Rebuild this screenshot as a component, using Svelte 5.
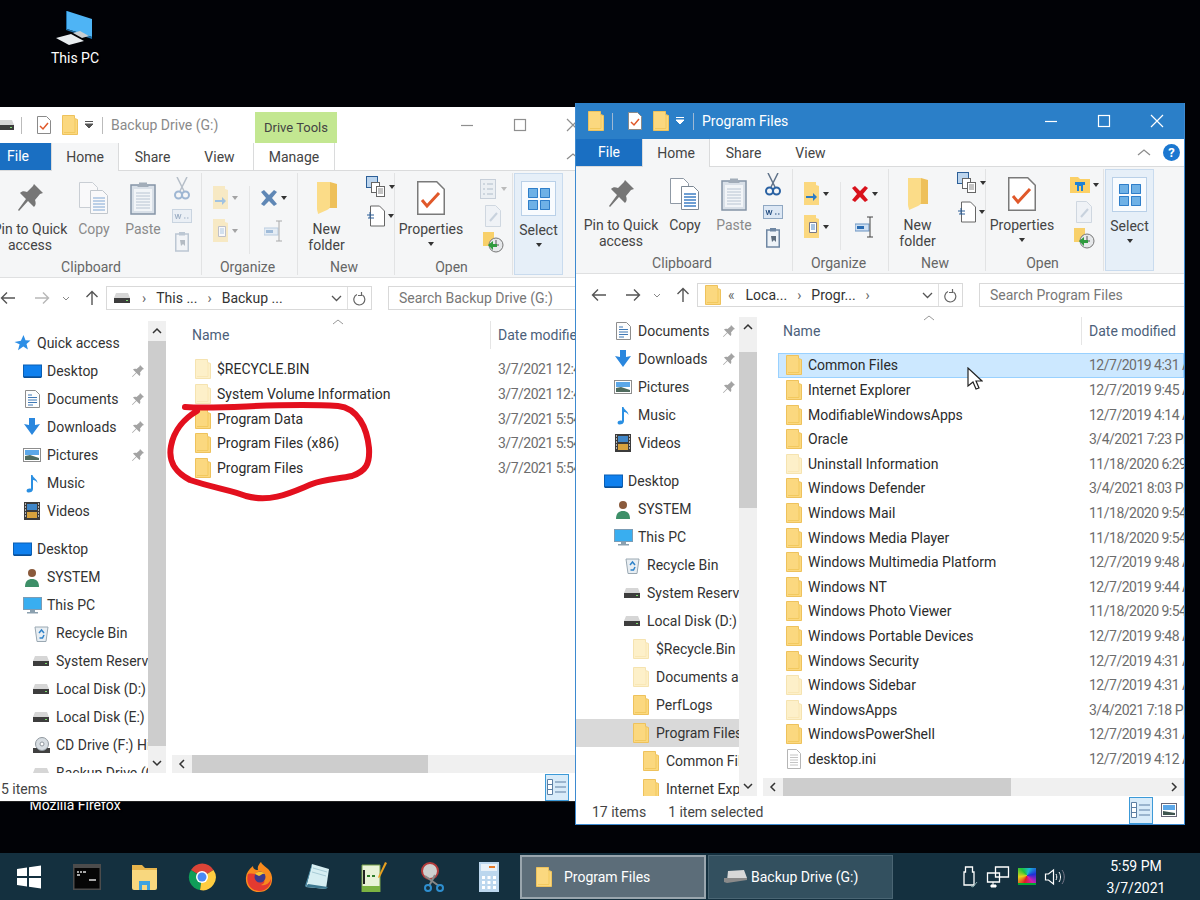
<script>
  const navBack = [
    { t: 'Quick access', lv: 0, ic: 'star' },
    { t: 'Desktop', lv: 1, ic: 'desk', pin: true },
    { t: 'Documents', lv: 1, ic: 'docs', pin: true },
    { t: 'Downloads', lv: 1, ic: 'down', pin: true },
    { t: 'Pictures', lv: 1, ic: 'pics', pin: true },
    { t: 'Music', lv: 1, ic: 'music' },
    { t: 'Videos', lv: 1, ic: 'video' },
    { t: 'Desktop', lv: 0, ic: 'desk', gap: true },
    { t: 'SYSTEM', lv: 1, ic: 'user' },
    { t: 'This PC', lv: 1, ic: 'pc' },
    { t: 'Recycle Bin', lv: 2, ic: 'bin' },
    { t: 'System Reserved', lv: 2, ic: 'drive' },
    { t: 'Local Disk (D:)', lv: 2, ic: 'drive' },
    { t: 'Local Disk (E:)', lv: 2, ic: 'drive' },
    { t: 'CD Drive (F:) Hiren', lv: 2, ic: 'cd' },
    { t: 'Backup Drive (G:)', lv: 2, ic: 'drive' }
  ];

  const navFront = [
    { t: 'Documents', lv: 1, ic: 'docs', pin: true },
    { t: 'Downloads', lv: 1, ic: 'down', pin: true },
    { t: 'Pictures', lv: 1, ic: 'pics', pin: true },
    { t: 'Music', lv: 1, ic: 'music' },
    { t: 'Videos', lv: 1, ic: 'video' },
    { t: 'Desktop', lv: 0, ic: 'desk', gap: true },
    { t: 'SYSTEM', lv: 1, ic: 'user' },
    { t: 'This PC', lv: 1, ic: 'pc' },
    { t: 'Recycle Bin', lv: 2, ic: 'bin' },
    { t: 'System Reserved', lv: 2, ic: 'drive' },
    { t: 'Local Disk (D:)', lv: 2, ic: 'drive' },
    { t: '$Recycle.Bin', lv: 3, ic: 'pale' },
    { t: 'Documents and Settings', lv: 3, ic: 'pale' },
    { t: 'PerfLogs', lv: 3, ic: 'folder' },
    { t: 'Program Files', lv: 3, ic: 'folder', sel: true },
    { t: 'Common Files', lv: 4, ic: 'folder' },
    { t: 'Internet Explorer', lv: 4, ic: 'folder' }
  ];

  const filesBack = [
    { n: '$RECYCLE.BIN', d: '3/7/2021 12:47 PM', ic: 'pale' },
    { n: 'System Volume Information', d: '3/7/2021 12:48 PM', ic: 'pale' },
    { n: 'Program Data', d: '3/7/2021 5:54 PM', ic: 'folder' },
    { n: 'Program Files (x86)', d: '3/7/2021 5:54 PM', ic: 'folder' },
    { n: 'Program Files', d: '3/7/2021 5:54 PM', ic: 'folder' }
  ];

  const filesFront = [
    { n: 'Common Files', d: '12/7/2019 4:31 AM', ic: 'folder', sel: true },
    { n: 'Internet Explorer', d: '12/7/2019 9:45 AM', ic: 'folder' },
    { n: 'ModifiableWindowsApps', d: '12/7/2019 4:14 AM', ic: 'folder' },
    { n: 'Oracle', d: '3/4/2021 7:23 PM', ic: 'folder' },
    { n: 'Uninstall Information', d: '11/18/2020 6:29 PM', ic: 'pale' },
    { n: 'Windows Defender', d: '3/4/2021 8:03 PM', ic: 'folder' },
    { n: 'Windows Mail', d: '11/18/2020 9:54 PM', ic: 'folder' },
    { n: 'Windows Media Player', d: '11/18/2020 9:54 PM', ic: 'folder' },
    { n: 'Windows Multimedia Platform', d: '12/7/2019 9:48 AM', ic: 'folder' },
    { n: 'Windows NT', d: '12/7/2019 9:44 AM', ic: 'folder' },
    { n: 'Windows Photo Viewer', d: '11/18/2020 9:54 PM', ic: 'folder' },
    { n: 'Windows Portable Devices', d: '12/7/2019 9:48 AM', ic: 'folder' },
    { n: 'Windows Security', d: '12/7/2019 4:31 AM', ic: 'folder' },
    { n: 'Windows Sidebar', d: '12/7/2019 4:31 AM', ic: 'pale' },
    { n: 'WindowsApps', d: '3/4/2021 7:18 PM', ic: 'pale' },
    { n: 'WindowsPowerShell', d: '12/7/2019 4:31 AM', ic: 'folder' },
    { n: 'desktop.ini', d: '12/7/2019 4:12 AM', ic: 'file' }
  ];

  const back = {
    cls: 'win-back', title: 'Backup Drive (G:)', titleIcon: 'drive', inactive: true, drive: true,
    crumbIcon: 'drive', crumbs: ['This ...', 'Backup ...'], search: 'Search Backup Drive (G:)',
    nav: navBack, files: filesBack, status: '5 items', selected: '', thumbTop: 0, thumbH: 405, hThumb: 236
  };
  const front = {
    cls: 'win-front', title: 'Program Files', titleIcon: 'folder', inactive: false, drive: false,
    crumbIcon: 'folder', crumbs: ['Loca...', 'Progr...'], search: 'Search Program Files',
    nav: navFront, files: filesFront, status: '17 items', selected: '1 item selected', thumbTop: 15, thumbH: 156, hThumb: 228
  };
</script>

{#snippet smallIcon(ic)}
  {#if ic === 'folder'}
    <svg width="16" height="20" viewBox="0 0 16 20"><path d="M.5.5h12v3l3 1v15H.5z" fill="#fbd87f" stroke="#eec25c"/><path d="M2 17.5h11V4" fill="none" stroke="#f2c95f"/></svg>
  {:else if ic === 'pale'}
    <svg width="16" height="20" viewBox="0 0 16 20"><path d="M.5.5h12v3l3 1v15H.5z" fill="#fdf0c9" stroke="#f5e3b0"/><path d="M2 17.5h11V4" fill="none" stroke="#f9e7b6"/></svg>
  {:else if ic === 'file'}
    <svg width="16" height="20" viewBox="0 0 16 20"><path d="M1.5.5h9l4 4v15h-13z" fill="#fff" stroke="#b5b5b5"/><path d="M4 6h8M4 8.5h8M4 11h8M4 13.5h8M4 16h8" stroke="#c4c4c4"/></svg>
  {:else if ic === 'drive'}
    <svg width="18" height="12" viewBox="0 0 18 12"><path d="M3 1h12l2 5H1z" fill="#d6d6d6"/><rect x="1" y="6" width="16" height="5" fill="#3d3d3d"/><rect x="13" y="8" width="2" height="1" fill="#7ddc6f"/></svg>
  {:else if ic === 'star'}
    <svg width="18" height="18" viewBox="0 0 18 18"><path d="M10.5 1l2 5.2 5 .4-4 3.4 1.4 5.4-4.6-3-5.3 3.8 1.6-6L1.500 8l6.400-1.300z" fill="#2c8ee6"/></svg>
  {:else if ic === 'desk'}
    <svg width="19" height="15" viewBox="0 0 19 15"><rect x=".5" y="1" width="18" height="12" fill="#0f80ee" stroke="#0b5fb4"/><rect x="1" y="12.500" width="17" height="1.500" fill="#0a4f96"/></svg>
  {:else if ic === 'docs'}
    <svg width="15" height="18" viewBox="0 0 15 18"><path d="M.5.5h10l4 4v13H.5z" fill="#fdfdfd" stroke="#8d8d8d"/><path d="M3 5h4M3 7.500h9M3 10h9M3 12.500h9M3 15h5" stroke="#3f78b5"/></svg>
  {:else if ic === 'down'}
    <svg width="18" height="18" viewBox="0 0 18 18"><path d="M6 0h6v7l5-1-8 11L1 6l5 1z" fill="#2a87de"/></svg>
  {:else if ic === 'pics'}
    <svg width="18" height="14" viewBox="0 0 18 14"><rect x=".5" y=".5" width="17" height="13" fill="#fff" stroke="#8d8d8d"/><rect x="2" y="2" width="14" height="5" fill="#5ba7e8"/><path d="M2 12V8l5-1 9 3v2z" fill="#4f6b5e"/></svg>
  {:else if ic === 'music'}
    <svg width="14" height="19" viewBox="0 0 14 19"><path d="M6 1h1.500c.5 3 5 4 5 8-1-2-3-3-4.500-3v9c0 2.500-2 3.500-4.500 3.500C1.500 18.500 1 16 2.500 15c1-.7 2.500-.8 3.500-.3z" fill="#2a8fe2"/></svg>
  {:else if ic === 'video'}
    <svg width="16" height="18" viewBox="0 0 16 18"><rect width="16" height="18" fill="#3b3b3b"/><rect x="3" y="2" width="10" height="6" fill="#3f86c8"/><rect x="3" y="10" width="10" height="6" fill="#d8a23d"/><path d="M1 2h1M1 5h1M1 8h1M1 11h1M1 14h1M14 2h1M14 5h1M14 8h1M14 11h1M14 14h1" stroke="#ddd" stroke-width="1.500"/></svg>
  {:else if ic === 'user'}
    <svg width="16" height="19" viewBox="0 0 16 19"><circle cx="8" cy="5" r="4" fill="#8a5a3c"/><path d="M1 19c0-6 3-8 7-8s7 2 7 8z" fill="#3d8f68"/></svg>
  {:else if ic === 'pc'}
    <svg width="19" height="17" viewBox="0 0 19 17"><rect x=".5" y=".5" width="18" height="12" fill="#39aef0" stroke="#7b9cb5"/><path d="M7 13h5v2H7zM4 15h11v1.500H4z" fill="#8ba0af"/></svg>
  {:else if ic === 'bin'}
    <svg width="15" height="17" viewBox="0 0 15 17"><path d="M1 2h13l-2 14.500H3z" fill="#e8eef3" stroke="#9aa8b2"/><path d="M5 8l2.500-3 2.500 3M10 10l-1.500 3H5.500" fill="none" stroke="#2f82c9" stroke-width="1.500"/></svg>
  {:else if ic === 'cd'}
    <svg width="19" height="17" viewBox="0 0 19 17"><rect x="1" y="11" width="17" height="5" fill="#404040"/><circle cx="10" cy="7" r="6.500" fill="#d7dde2" stroke="#8f979e"/><circle cx="10" cy="7" r="2" fill="#fff" stroke="#8f979e"/></svg>
  {/if}
{/snippet}

{#snippet bigFolder()}
  <svg width="22" height="34" viewBox="0 0 22 34"><path d="M2 1h12l7 2v24H6z" fill="#eec05a"/><path d="M1 1h13v24c0 2-1 3-3 4l-9 4c0-2-1-3-1-5z" fill="#fbdc88"/></svg>
{/snippet}

{#snippet dd()}<i class="dd"></i>{/snippet}

{#snippet ribbon(w)}
  <div class="ribbon">
    <div class="group clip">
      <div class="tools">
        <div class="big pinb">
          <div class="ico"><svg width="30" height="32" viewBox="0 0 30 32"><path d="M19 2l9 9-3 1-5 6c1 3 1 5-1 7l-6-6-9 10-1-1 8-11-6-6c2-2 4-2 7-1l6-6z" fill="#767676"/></svg></div>
          <span>Pin to Quick<br />access</span>
        </div>
        <div class="big copyb" class:muted={w.inactive}>
          <div class="ico" class:off={w.inactive}><svg width="32" height="34" viewBox="0 0 32 34"><path d="M1.500 1.500h13l5 5v20h-18z" fill="#fff" stroke="#8f99a5"/><path d="M12.500 9.500h12l5 5v18h-17z" fill="#fff" stroke="#7c8894"/><path d="M15 17h12M15 20h12M15 23h12M15 26h12M15 29h12" stroke="#3f7fc4" stroke-width="1.500"/></svg></div>
          <span>Copy</span>
        </div>
        <div class="big pasteb muted">
          <div class="ico"><svg width="26" height="34" viewBox="0 0 26 34"><rect x="1" y="4" width="24" height="29" fill="#d9e0e8" stroke="#8494a6" stroke-width="1.500"/><rect x="4" y="8" width="18" height="22" fill="#f2f5f8"/><path d="M6 12h14M6 15h14M6 18h14M6 21h14M6 24h14M6 27h14" stroke="#b8c4d2"/><path d="M9 4V1.500h8V4l2 2H7z" fill="#a2adb9"/></svg></div>
          <span>Paste</span>
        </div>
        <div class="small-col scis">
          <div class:off={w.inactive}><svg width="16" height="24" viewBox="0 0 16 24"><path d="M3 0l7 14M13 0L6 14" stroke="#60738a" stroke-width="1.500" fill="none"/><circle cx="4.500" cy="18" r="3.500" fill="none" stroke="#2a62a3" stroke-width="2"/><circle cx="11.500" cy="18" r="3.500" fill="none" stroke="#2a62a3" stroke-width="2"/></svg></div>
          <div class:off={w.inactive}><svg width="20" height="14" viewBox="0 0 20 14"><rect x=".5" y=".5" width="19" height="13" fill="#dce7f4" stroke="#8fa7c2"/><path d="M3 5l1.500 5 1.500-5 1.500 5L9 5M12 9h1.500M15 9h1.500" stroke="#264f82" fill="none"/></svg></div>
          <div class:off={w.inactive}><svg width="14" height="20" viewBox="0 0 14 20"><rect x=".75" y="2" width="12.500" height="17" fill="#eef3f8" stroke="#6f87a3" stroke-width="1.500"/><rect x="4" y="0" width="6" height="3.500" fill="#6f87a3"/><path d="M5 8h5v6l-2-2-2 2z" fill="#5d6c7c"/></svg></div>
        </div>
      </div>
      <div class="glabel">Clipboard</div>
    </div>

    <div class="group org">
      <div class="tools org-tools">
        <div class="org-col">
          <div class="row-ico" class:off={w.inactive}>
            <svg width="16" height="24" viewBox="0 0 16 24"><path d="M0 0h12v3l3 1v19H0z" fill="#fbd87f"/><path d="M4 17h7v-3l4 4-4 4v-3H4z" transform="translate(-2 -3)" fill="#2d7cc4"/></svg>{@render dd()}
          </div>
          <div class="row-ico" class:off={w.inactive}>
            <svg width="16" height="24" viewBox="0 0 16 24"><path d="M0 0h12v3l3 1v19H0z" fill="#fbd87f"/><path d="M5.500 7.500h7v10h-7z" fill="#fff" stroke="#778"/><path d="M7 10h4M7 12h4M7 14h4" stroke="#4d86c4"/></svg>{@render dd()}
          </div>
        </div>
        <div class="org-col">
          <div class="row-ico">
            <svg width="18" height="18" viewBox="0 0 18 18"><path class="x-mark" d="M1 3l3-2 5 5 5-5 3 2-5 6 5 6-3 2-5-5-5 5-3-2 5-6z"/></svg>{@render dd()}
          </div>
          <div class="row-ico" class:off={w.inactive}>
            <svg width="20" height="22" viewBox="0 0 20 22"><rect x="0" y="8" width="14" height="7" fill="#cfe0f2" stroke="#6a93c2"/><rect x="2" y="10" width="7" height="3" fill="#2a6cb2"/><path d="M12 1h6M15 1v20M12 21h6" stroke="#444" fill="none"/></svg>
          </div>
        </div>
      </div>
      <div class="glabel">Organize</div>
    </div>

    <div class="group newg">
      <div class="tools">
        <div class="big newb">
          <div class="ico">{@render bigFolder()}</div>
          <span>New<br />folder</span>
        </div>
        <div class="new-col">
          <div class="row-ico">
            <svg width="20" height="22" viewBox="0 0 20 22"><rect x=".5" y=".5" width="11" height="11" fill="#bcd5ee" stroke="#2c5f98"/><rect x="5.500" y="6.500" width="8" height="10" fill="#fff" stroke="#666"/><rect x="10.500" y="10.500" width="8" height="10" fill="#fff" stroke="#666"/><path d="M12 13h5M12 15h5M12 17h5" stroke="#888"/></svg>{@render dd()}
          </div>
          <div class="row-ico">
            <svg width="18" height="22" viewBox="0 0 18 22"><path d="M3.500 1h9l5 5v15h-14z" fill="#fff" stroke="#666"/><path d="M0 10h7M3 7v6M1 13h6" stroke="#2c5f98" fill="none"/></svg>{@render dd()}
          </div>
        </div>
      </div>
      <div class="glabel">New</div>
    </div>

    <div class="group open">
      <div class="tools">
        <div class="big propb">
          <div class="ico"><svg width="28" height="34" viewBox="0 0 28 34"><path d="M.75.75h19l7.500 7.500v25H.75z" fill="#fff" stroke="#7a7a7a" stroke-width="1.500"/><path d="M5 19l5 6L22 12" fill="none" stroke="#e0582a" stroke-width="3"/></svg></div>
          <span>Properties</span>
          {@render dd()}
        </div>
        <div class="small-col open-col">
          <div class="row-ico">
            {#if w.inactive}
              <svg class="off" width="18" height="20" viewBox="0 0 18 20"><rect x=".5" y=".5" width="15" height="19" fill="#dfe6ee" stroke="#8a9bb0"/><path d="M3 5h2M7 5h6M3 10h2M7 10h6M3 15h2M7 15h6" stroke="#53708f"/></svg>
            {:else}
              <svg width="20" height="18" viewBox="0 0 20 18"><path d="M0 1h8l2 2h10v14H0z" fill="#fbd066"/><path d="M5 6h10v3h-2v6h-2v-5H9v5H7V9H5z" fill="#1f82d6"/></svg>
            {/if}
            {#if !w.inactive}{@render dd()}{:else}<i class="dd faint"></i>{/if}
          </div>
          <div class="row-ico off">
            <svg width="16" height="22" viewBox="0 0 16 22"><path d="M.5.5h10l5 5v16H.5z" fill="#e8eef6" stroke="#9badc2"/><path d="M5 16L12 8" stroke="#8ba1bb" stroke-width="2"/></svg>
          </div>
          <div class="row-ico">
            <svg width="22" height="22" viewBox="0 0 22 22"><path d="M1 1h11v14H1z" fill="#f8d06a"/><circle cx="14" cy="14" r="7" fill="#e6e8ea" stroke="#777"/><path d="M14 9v5h3" stroke="#555" fill="none"/><path d="M6 14l5-4v3h4v3h-4v3z" fill="#2f9a3e"/></svg>
          </div>
        </div>
      </div>
      <div class="glabel">Open</div>
    </div>

    <div class="select-box">
      <div class="sel-inner">
        <svg width="22" height="22" viewBox="0 0 22 22"><path d="M0 0h10v10H0zM12 0h10v10H12zM0 12h10v10H0zM12 12h10v10H12z" fill="#6eb1e6"/><path d="M.5.5h9v9h-9zM12.500.5h9v9h-9zM.5 12.500h9v9h-9zM12.500 12.500h9v9h-9z" fill="none" stroke="#2f7ec9"/></svg>
      </div>
      <span>Select</span>
      {@render dd()}
    </div>
  </div>
{/snippet}

{#snippet explorer(w)}
  <section class="win {w.cls}">
    <div class="titlebar">
      <div class="qa qa-first">{@render smallIcon(w.titleIcon)}</div>
      <i class="qsep"></i>
      <svg class="qa-prop" width="14" height="18" viewBox="0 0 14 18"><path d="M.5.5h9l4 4v13H.5z" fill="#fff" stroke="#8a8a8a"/><path d="M3 10l3 3 5-6" fill="none" stroke="#e0582a" stroke-width="1.500"/></svg>
      <div class="qa qa-folder">{@render smallIcon('folder')}</div>
      <svg class="qa-caret" width="10" height="8" viewBox="0 0 10 8"><path d="M1 .5h8M1 3l4 4 4-4z" stroke="currentColor" fill="currentColor"/></svg>
      <i class="qsep2"></i>
      <span class="wtitle">{w.title}</span>
      {#if w.drive}<div class="drive-tab">Drive Tools</div>{/if}
      <div class="wctl">
        <svg width="14" height="14" viewBox="0 0 14 14"><path d="M1 7.500h12" stroke="currentColor" stroke-width="1.200"/></svg>
        <svg width="14" height="14" viewBox="0 0 14 14"><rect x="1.500" y="1.500" width="11" height="11" fill="none" stroke="currentColor" stroke-width="1.200"/></svg>
        <svg width="14" height="14" viewBox="0 0 14 14"><path d="M1 1l12 12M13 1L1 13" stroke="currentColor" stroke-width="1.200"/></svg>
      </div>
    </div>

    <div class="tabs">
      <div class="file-tab">File</div>
      <div class="tab active">Home</div>
      <div class="tab">Share</div>
      <div class="tab">View</div>
      {#if w.drive}<div class="tab manage">Manage</div>{/if}
      <svg class="collapse" width="14" height="8" viewBox="0 0 14 8"><path d="M1 7l6-5 6 5" fill="none" stroke="#8d8d8d" stroke-width="1.300"/></svg>
      {#if !w.drive}<span class="help">?</span>{/if}
    </div>

    {@render ribbon(w)}

    <div class="addr-row">
      <svg class="navarrow back-a" width="16" height="14" viewBox="0 0 16 14"><path d="M15 7H2M7 1.500L1.500 7 7 12.500" fill="none" stroke="#555" stroke-width="1.400"/></svg>
      <svg class="navarrow fwd-a" class:off={w.inactive} width="16" height="14" viewBox="0 0 16 14"><path d="M1 7h13M9 1.500L14.500 7 9 12.500" fill="none" stroke="#555" stroke-width="1.400"/></svg>
      <svg class="navchev" width="8" height="5" viewBox="0 0 8 5"><path d="M1 1l3 3 3-3" fill="none" stroke="#888"/></svg>
      <svg class="navarrow up-a" width="14" height="16" viewBox="0 0 14 16"><path d="M7 15V2M1.500 7L7 1.500 12.500 7" fill="none" stroke="#555" stroke-width="1.400"/></svg>
      <div class="addr">
        <span class="addr-ic">{@render smallIcon(w.crumbIcon)}</span>
        {#if !w.drive}<span class="laquo">«</span>{:else}<span class="chev">›</span>{/if}
        <span class="crumb">{w.crumbs[0]}</span>
        <span class="chev">›</span>
        <span class="crumb">{w.crumbs[1]}</span>
        {#if !w.drive}<span class="chev">›</span>{/if}
        <svg class="addr-dd" width="11" height="7" viewBox="0 0 11 7"><path d="M1 1l4.500 4.500L10 1" fill="none" stroke="#555" stroke-width="1.300"/></svg>
        <i class="addr-sep"></i>
        <svg class="refresh" width="14" height="15" viewBox="0 0 14 15"><path d="M4 3.500A5.500 5.500 0 1 0 9.500 4M8.500 1v3.500H5" fill="none" stroke="#666" stroke-width="1.200"/></svg>
      </div>
      <div class="searchbox">{w.search}</div>
    </div>

    <div class="body">
      <nav class="navpane" class:top-pad={w.drive}>
        {#each w.nav as n}
          <div class="nrow lv{n.lv}" class:sel={n.sel} class:gap={n.gap}>
            <span class="nic">{@render smallIcon(n.ic)}</span>
            <span class="ntext">{n.t}</span>
            {#if n.pin}
              <svg class="npin" width="14" height="14" viewBox="0 0 14 14"><path d="M9 1l4 4-1.500.5-2.500 3c.5 1.500.5 2.500-.5 3.500L5.500 9 1.500 13 1 12.500l4-4L2 5.500C3 4.500 4 4.500 5.500 5l3-2.500z" fill="#a3a3a3"/></svg>
            {/if}
          </div>
        {/each}
      </nav>
      <div class="vscroll">
        <svg class="sb-arrow" width="10" height="20" viewBox="0 0 10 20"><path d="M1 12l4-4 4 4" fill="none" stroke="#333" stroke-width="1.500"/></svg>
        <div class="vthumb" style="margin-top: {w.thumbTop}px; height: {w.thumbH}px"></div>
        <svg class="sb-arrow sb-end" width="10" height="20" viewBox="0 0 10 20"><path d="M1 8l4 4 4-4" fill="none" stroke="#333" stroke-width="1.500"/></svg>
      </div>
      <div class="content">
        <div class="listhead">
          <span class="hname">Name</span>
          <svg class="sortcaret" width="12" height="6" viewBox="0 0 12 6"><path d="M1 5l5-4 5 4" fill="none" stroke="#999"/></svg>
          <span class="hdate">Date modified</span>
        </div>
        <div class="rows">
          {#each w.files as f}
            <div class="frow" class:sel={f.sel}>
              <span class="fic">{@render smallIcon(f.ic)}</span>
              <span class="fname">{f.n}</span>
              <span class="fdate">{f.d}</span>
            </div>
          {/each}
        </div>
        <div class="hscroll">
          <svg width="20" height="18" viewBox="0 0 20 18"><path d="M12 5L8 9l4 4" fill="none" stroke="#333" stroke-width="1.500"/></svg>
          <div class="hthumb" style="width: {w.hThumb}px"></div>
          <svg class="h-end" width="20" height="18" viewBox="0 0 20 18"><path d="M8 5l4 4-4 4" fill="none" stroke="#333" stroke-width="1.500"/></svg>
        </div>
      </div>
    </div>

    <div class="statusbar">
      <span class="count">{w.status}</span>
      {#if w.selected}<span class="selcount">{w.selected}</span>{/if}
      <div class="views">
        <div class="viewbtn on"><svg width="20" height="16" viewBox="0 0 20 16"><path d="M.5.5h5v15h-5zM8 3h11M8 8h11M8 13h11M1 5.500h4M1 10.500h4" fill="#fff" stroke="#5c7fa3"/></svg></div>
        <div class="viewbtn"><svg width="16" height="14" viewBox="0 0 16 14"><rect x=".5" y=".5" width="15" height="13" fill="#fff" stroke="#667"/><rect x="2" y="2" width="12" height="5" fill="#5ba7e8"/><path d="M2 12V8l12 2v2z" fill="#3f5550"/></svg></div>
      </div>
    </div>
  </section>
{/snippet}

<div class="desktop">
  <div class="deskicon pc-icon">
    <svg width="40" height="36" viewBox="0 0 40 36"><path d="M12 1l25 8v18L12 19z" fill="#4eb4f5"/><path d="M12 1v18l25 8v2l-26-9V1z" fill="#1d6ea8"/><path d="M1 28l15-4 13 7-15 4z" fill="#e9edf0"/><path d="M18 23l7-2 9 5-7 2z" fill="#c9ced2"/></svg>
    <span>This PC</span>
  </div>
  <div class="deskicon ff-icon"><span>Mozilla Firefox</span></div>

  {@render explorer(back)}

  <svg class="scrawl" width="230" height="120" viewBox="0 0 230 120">
    <path d="M20 7C60 10 110 2 173 6c20 2 29 22 31 42 1 16-3 23-17 28-14 3-28 3-40 8-20 8-40 19-66 12C70 91 45 87 25 80 10 72 3 62 6 46 9 30 20 18 32 11" fill="none" stroke="#e3101e" stroke-width="6" stroke-linecap="round"/>
  </svg>

  {@render explorer(front)}

  <svg class="cursor" width="16" height="24" viewBox="0 0 16 24"><path d="M1 1v18l5-4 3 7 3-1-3-7h6z" fill="#fff" stroke="#222" stroke-width="1.200"/></svg>

  <footer class="taskbar">
    <div class="tb-ic start"><svg width="26" height="26" viewBox="0 0 26 26"><path d="M1 5l10-1.500V12H1zM13 3.200L25 1.500V12H13zM1 14h10v8.500L1 21zM13 14h12v10.500L13 22.800z" fill="#fff"/></svg></div>
    <div class="tb-ic"><svg width="28" height="26" viewBox="0 0 28 26"><rect width="28" height="26" fill="#4c4c4c"/><rect x="1.500" y="4" width="25" height="20.500" fill="#060606"/><path d="M4 8h2M7 8h2M10 8h3M4 11h3M16 16h7" stroke="#ddd" stroke-width="1.500"/></svg></div>
    <div class="tb-ic"><svg width="27" height="26" viewBox="0 0 27 26"><path d="M1 1h10l3 3h12v4H1z" fill="#e6b44c"/><path d="M1 6h25v18a2 2 0 0 1-2 2H3a2 2 0 0 1-2-2z" fill="#f8d77e"/><path d="M8 17h11v9h-3v-5h-5v5H8z" fill="#3ea3e0"/></svg></div>
    <div class="tb-ic"><svg width="28" height="28" viewBox="0 0 28 28"><path d="M14 14L3 7a13 13 0 0 1 22.500 0z" fill="#dc4437"/><path d="M14 14L3 7a13 13 0 0 0 9 20z" fill="#0f9d58"/><path d="M14 14l11.500-7A13 13 0 0 1 12 27z" fill="#ffcd40"/><circle cx="14" cy="14" r="6" fill="#fff"/><circle cx="14" cy="14" r="4.500" fill="#4a8af4"/></svg></div>
    <div class="tb-ic"><svg width="28" height="30" viewBox="0 0 28 30"><path d="M8 4c0 3 2 4 5 4-1-3 1-6 3-8 1 4 10 6 11 15 1 9-5 15-13 15C6 30 0 24 1 15c.3-4 3-8 7-11z" fill="#f98a1d"/><path d="M3 12c-2 6 0 16 11 17 8 0 12-6 12-12-2 5-6 7-10 6 3-1 4-3 3-5-3 2-6 1-6-2 2-2 4-2 5 0 0-3-3-5-6-4-3 0-6-1-9 0z" fill="#e43a30"/><circle cx="15" cy="15" r="5.500" fill="#3d3a8c"/><path d="M10 12c2-3 8-3 10 0-3-1-4 2-6 2z" fill="#f9c22d"/></svg></div>
    <div class="tb-ic"><svg width="26" height="30" viewBox="0 0 26 30"><path d="M8 2l17 5-3 20-20-2z" fill="#d6eef2"/><path d="M8 2L1 24l1 1 6-21z" fill="#4d8ea8"/><path d="M2 25l20 2 2-2-20-3z" fill="#3d7890"/><path d="M9 6l14 4M8 10l14 4" stroke="#a7cbd6"/></svg></div>
    <div class="tb-ic"><svg width="26" height="30" viewBox="0 0 26 30"><path d="M1 3h18v27H1z" fill="#e9f3d8" stroke="#7aa34a"/><path d="M3 8v14" stroke="#222" stroke-width="2"/><path d="M6 14h3M11 14h3" stroke="#2f7d2a" stroke-width="2"/><path d="M1 24h18v6H1z" fill="#7cb342"/><path d="M24 0l2 1-7 14-2 1 .5-2z" fill="#e8a020"/></svg></div>
    <div class="tb-ic"><svg width="26" height="30" viewBox="0 0 26 30"><circle cx="11" cy="9" r="8" fill="#cfcfcf" stroke="#b33b3b" stroke-width="2"/><path d="M6 14L20 24M16 13L10 24" stroke="#888" stroke-width="2"/><circle cx="21" cy="26" r="3" fill="none" stroke="#2e8fd0" stroke-width="2"/><circle cx="9" cy="26" r="3" fill="none" stroke="#2e8fd0" stroke-width="2"/></svg></div>
    <div class="tb-ic"><svg width="20" height="30" viewBox="0 0 20 30"><rect width="20" height="30" fill="#bcd7ee"/><rect x="2" y="2" width="16" height="7" fill="#e8f1f8"/><path d="M3 14h3v3H3zM8.500 14h3v3h-3zM14 14h3v3h-3zM3 19h3v3H3zM8.500 19h3v3h-3zM14 19h3v3h-3zM3 24h3v3H3zM8.500 24h3v3h-3zM14 24h3v3h-3z" fill="#fff"/><path d="M10 5h6" stroke="#e57a2a" stroke-width="2"/></svg></div>

    <div class="taskbtn current">
      <span class="tbtn-ic">{@render smallIcon('folder')}</span>
      <span>Program Files</span>
    </div>
    <div class="taskbtn">
      <svg class="tbtn-drv" width="25" height="15" viewBox="0 0 25 15"><path d="M5 2l16-1 3 8-20 3z" fill="#d8d8d8"/><path d="M1 9l23 0v2L4 14l-3-1z" fill="#8a8a8a"/></svg>
      <span>Backup Drive (G:)</span>
    </div>

    <div class="tray">
      <svg width="16" height="22" viewBox="0 0 16 22"><path d="M3.500 1h7v5h1.500v13H2V6h1.500z" fill="none" stroke="#fff" stroke-width="1.300"/><path d="M9 20l2 1 4-5" fill="none" stroke="#8aa" /></svg>
      <svg width="24" height="22" viewBox="0 0 24 22"><path d="M9.500 1h13v10h-13zM1.500 7h12v9h-12z" fill="#14303f" stroke="#fff" stroke-width="1.300"/><path d="M5 19h5v2H5zM7 16v3" stroke="#fff" fill="#fff"/></svg>
      <div class="colorbox"></div>
      <svg width="22" height="18" viewBox="0 0 22 18"><path d="M1.500 6h3l5-4v14l-5-4h-3z" fill="none" stroke="#fff" stroke-width="1.200"/><path d="M12 6c1 2 1 4 0 6M15 4c2 3 2 7 0 10" fill="none" stroke="#fff"/><path d="M18 2c3 4 3 10 0 14" fill="none" stroke="#778"/></svg>
    </div>
    <div class="clock"><span>5:59 PM</span><span>3/7/2021</span></div>
  </footer>
</div>

<style>
  :global(body) {
    margin: 0;
    background: #000;
  }

  .desktop {
    position: relative;
    width: 1200px;
    height: 900px;
    overflow: hidden;
    background: #010206;
    font-family: Roboto, "Liberation Sans", sans-serif;
    font-size: 14px;
    color: #333;
  }

  .off { opacity: 0.42; }

  /* desktop shortcuts */
  .deskicon {
    position: absolute;
    display: flex;
    flex-direction: column;
    align-items: center;
    color: #fff;
    text-shadow: 0 1px 2px #000;
  }

  .pc-icon { left: 45px; top: 10px; width: 60px; gap: 4px; }
  .ff-icon { left: 15px; top: 797px; width: 120px; }

  /* explorer windows */
  .win {
    position: absolute;
    box-sizing: border-box;
    display: flex;
    flex-direction: column;
    background: #fff;
  }

  .win-back {
    left: -16px;
    top: 107px;
    width: 617px;
    height: 695px;
    border: 1px solid #222;
    border-top: none;
  }

  .win-front {
    left: 575px;
    top: 103px;
    width: 610px;
    height: 722px;
    border: 1px solid #3d8ad0;
    border-top: none;
  }

  .titlebar {
    position: relative;
    display: flex;
    align-items: center;
    height: 36px;
    flex-shrink: 0;
    padding-left: 12px;
    color: #222;
  }

  .win-back .titlebar { color: #555; }
  .win-front .titlebar { background: #2b7fc8; color: #fff; }

  .qa { display: flex; align-items: center; }
  .qa-first { width: 24px; }
  .qsep, .qsep2 { width: 1px; height: 17px; background: #9fb9d4; }
  .win-back .qsep, .win-back .qsep2 { background: #bbb; }
  .qa-prop { margin-left: 15px; }
  .qa-folder { margin-left: 11px; }
  .qa-caret { margin-left: 6px; }
  .qsep2 { margin-left: 8px; }
  .wtitle { margin-left: 8px; }
  .win-back .wtitle { color: #8a8a8a; }

  .drive-tab {
    position: absolute;
    left: 270px;
    top: 5px;
    bottom: 0;
    width: 82px;
    display: flex;
    align-items: center;
    justify-content: center;
    background: #c3e791;
    font-size: 13px;
    color: #444;
  }

  .wctl {
    position: absolute;
    right: 20px;
    top: 11px;
    display: flex;
    gap: 39px;
  }

  .win-back .wctl { right: 20px; color: #8f8f8f; }

  .tabs {
    display: flex;
    align-items: stretch;
    height: 28px;
    flex-shrink: 0;
    background: #fff;
    border-bottom: 1px solid #dadbdc;
    box-sizing: border-box;
  }

  .file-tab {
    width: 66px;
    background: #1a6fc2;
    color: #fff;
    text-align: center;
    line-height: 27px;
  }

  .tab {
    width: 67px;
    text-align: center;
    line-height: 28px;
    color: #444;
  }

  .tab.active {
    width: 68px;
    background: #f5f6f7;
    border: 1px solid #dadbdc;
    border-bottom: none;
    border-top: none;
    margin-bottom: -1px;
    box-sizing: border-box;
    height: 28px;
  }

  .tab.manage {
    width: 82px;
    box-sizing: border-box;
    border-left: 1px solid #dadbdc;
    border-right: 1px solid #dadbdc;
  }

  .collapse { margin: 9px 0 0 auto; }
  .win-back .collapse { margin-right: 20px; }

  .help {
    width: 17px;
    height: 17px;
    margin: 5px 4px 0 12px;
    border-radius: 50%;
    background: #1b77d0;
    color: #fff;
    font-weight: 700;
    font-size: 13px;
    text-align: center;
    line-height: 17px;
  }

  /* ribbon */
  .ribbon {
    display: flex;
    height: 107px;
    flex-shrink: 0;
    box-sizing: border-box;
    background: #f5f6f7;
    border-bottom: 1px solid #dfe0e1;
    color: #444;
    line-height: 16px;
  }

  .group {
    display: flex;
    flex-direction: column;
    box-sizing: border-box;
    border-right: 1px solid #e2e3e4;
    margin: 2px 0;
  }

  .clip { width: 217px; }
  .org { width: 96px; }
  .newg { width: 97px; }
  .open { width: 118px; }

  .tools {
    display: flex;
    height: 85px;
    padding-top: 7px;
    box-sizing: border-box;
  }

  .glabel {
    text-align: center;
    color: #666;
    line-height: 16px;
    margin-top: 2px;
    padding-right: 4px;
  }

  .big {
    display: flex;
    flex-direction: column;
    align-items: center;
    text-align: center;
    flex-shrink: 0;
  }

  .big .ico {
    height: 35px;
    margin-bottom: 6px;
    display: flex;
    align-items: center;
    justify-content: center;
  }

  .muted { color: #8a8a8a; }
  .pinb { width: 80px; margin-left: 5px; }
  .copyb { width: 48px; }
  .pasteb { width: 50px; }
  .newb { width: 57px; }
  .propb { width: 76px; margin-left: -2px; }

  .propb .dd, .select-box .dd { margin-top: 5px; }

  .small-col {
    display: flex;
    flex-direction: column;
    align-items: center;
    width: 26px;
    margin-top: -4px;
  }

  .small-col > div {
    display: flex;
    align-items: center;
    justify-content: center;
    height: 26.5px;
  }

  .scis { margin-left: 1px; }
  .open-col { margin-left: 9px; width: 30px; }

  .org-tools { padding: 13px 0 0; }

  .org-col {
    flex: 1;
    display: flex;
    flex-direction: column;
    align-items: center;
    gap: 9px;
    height: 68px;
  }

  .org-col:first-child { border-right: 1px solid #e4e5e6; }

  .row-ico {
    display: flex;
    align-items: center;
    justify-content: center;
    gap: 3px;
    height: 24px;
  }

  .new-col {
    display: flex;
    flex-direction: column;
    gap: 5px;
    margin: -5px 0 0 11px;
    align-items: center;
  }

  .dd {
    display: inline-block;
    width: 0;
    height: 0;
    border-left: 3.5px solid transparent;
    border-right: 3.5px solid transparent;
    border-top: 4px solid #333;
  }

  .dd.faint { border-top-color: #bbb; }

  .x-mark { fill: #d8121c; }
  .win-back .x-mark { fill: #5f87b5; }

  .select-box {
    display: flex;
    flex-direction: column;
    align-items: center;
    box-sizing: border-box;
    width: 49px;
    margin: 2px 0 2px 1px;
    padding-top: 7px;
    background: #e6eff8;
    border: 1px solid #c9dbee;
  }

  .sel-inner {
    display: flex;
    align-items: center;
    justify-content: center;
    box-sizing: border-box;
    width: 35px;
    height: 35px;
    margin-bottom: 6px;
    background: #f8fbfe;
    border: 1px solid #b9d0e8;
  }

  /* address row */
  .addr-row {
    position: relative;
    display: flex;
    align-items: center;
    height: 43px;
    flex-shrink: 0;
    box-sizing: border-box;
    padding: 0 0 1px 15px;
  }

  .win-back .addr-row { padding-bottom: 3px; }

  .navarrow { flex-shrink: 0; }
  .fwd-a { margin-left: 18px; }
  .navchev { margin-left: 12px; flex-shrink: 0; }
  .up-a { margin-left: 15px; }

  .addr {
    display: flex;
    align-items: center;
    box-sizing: border-box;
    width: 266px;
    height: 24px;
    margin-left: 7px;
    flex-shrink: 0;
    border: 1px solid #d9d9d9;
    padding-left: 5px;
    color: #333;
  }

  .addr-ic { display: flex; width: 20px; justify-content: center; }
  .laquo { margin: 0 11px 0 5px; color: #666; }
  .chev { margin: 0 10px; color: #666; }
  .crumb { white-space: nowrap; }
  .addr-dd { margin-left: auto; }
  .addr-sep { width: 1px; height: 22px; background: #e0e0e0; margin: 0 5px; }
  .refresh { margin-right: 4px; }

  .searchbox {
    flex: 1;
    box-sizing: border-box;
    height: 24px;
    margin-left: 16px;
    padding-left: 10px;
    border: 1px solid #d9d9d9;
    border-right: none;
    color: #777;
    line-height: 22px;
    white-space: nowrap;
    overflow: hidden;
  }

  /* nav tree + list */
  .body {
    flex: 1;
    display: flex;
    min-height: 0;
  }

  .navpane {
    width: 163px;
    flex-shrink: 0;
    overflow: hidden;
  }

  .navpane.top-pad { padding-top: 8px; box-sizing: border-box; }

  .nrow {
    display: flex;
    align-items: center;
    height: 28px;
    white-space: nowrap;
    overflow: hidden;
  }

  .nrow.gap { margin-top: 10px; }
  .nrow.sel { background: #d9d9d9; }
  .lv0 { padding-left: 27px; }
  .lv1 { padding-left: 37px; }
  .lv2 { padding-left: 46px; }
  .lv3 { padding-left: 55px; }
  .lv4 { padding-left: 65px; }

  .nic {
    display: flex;
    justify-content: center;
    width: 20px;
    margin-right: 5px;
    flex-shrink: 0;
  }

  .npin { margin-left: auto; margin-right: 3px; flex-shrink: 0; }

  .vscroll {
    display: flex;
    flex-direction: column;
    align-items: center;
    width: 18px;
    flex-shrink: 0;
    background: #f0f0f0;
  }

  .sb-arrow { flex-shrink: 0; }
  .sb-end { margin-top: auto; }
  .vthumb { width: 18px; background: #cdcdcd; flex-shrink: 0; }

  .content {
    flex: 1;
    display: flex;
    flex-direction: column;
    min-width: 0;
    margin-left: 6px;
  }

  .listhead {
    position: relative;
    display: flex;
    align-items: center;
    height: 28px;
    flex-shrink: 0;
    color: #4c607a;
    padding-left: 20px;
  }

  .hdate {
    position: absolute;
    left: 318px;
    padding-left: 7px;
    border-left: 1px solid #e5e5e5;
    height: 28px;
    line-height: 28px;
    white-space: nowrap;
  }

  .sortcaret { position: absolute; left: 160px; top: -2px; }

  .rows {
    flex: 1;
    margin-top: 8px;
    min-height: 0;
    overflow: hidden;
  }

  .frow {
    display: flex;
    align-items: center;
    box-sizing: border-box;
    height: 24.62px;
    margin-left: 15px;
    padding-left: 8px;
    white-space: nowrap;
  }

  .frow.sel { background: #cce8ff; border: 1px solid #99d1ff; padding-left: 7px; }
  .fic { display: flex; width: 22px; flex-shrink: 0; }
  .fname { width: 281px; flex-shrink: 0; color: #2b2b2b; }
  .fdate { color: #6d6d6d; letter-spacing: -0.5px; }

  .hscroll {
    display: flex;
    align-items: center;
    height: 18px;
    flex-shrink: 0;
    background: #f0f0f0;
  }

  .hscroll svg { flex-shrink: 0; }
  .hthumb { height: 18px; background: #cdcdcd; }
  .h-end { margin-left: auto; }

  .statusbar {
    position: relative;
    display: flex;
    align-items: center;
    height: 28px;
    flex-shrink: 0;
    padding-left: 16px;
    color: #444;
  }

  .count, .selcount { padding-top: 3px; }
  .selcount { margin-left: 22px; }

  .views {
    display: flex;
    align-items: center;
    margin-left: auto;
    margin-right: 3px;
    gap: 4px;
  }

  .viewbtn {
    display: flex;
    align-items: center;
    justify-content: center;
    box-sizing: border-box;
    width: 24px;
    height: 27px;
  }

  .viewbtn.on { background: #d8ebf9; border: 1px solid #3c9ad8; }

  /* annotations on top of the windows */
  .scrawl { position: absolute; left: 165px; top: 400px; }
  .cursor { position: absolute; left: 967px; top: 367px; }

  /* taskbar */
  .taskbar {
    position: absolute;
    left: 0;
    right: 0;
    bottom: 0;
    display: flex;
    align-items: center;
    height: 47px;
    background: #14303f;
    color: #fff;
  }

  .tb-ic {
    display: flex;
    align-items: center;
    justify-content: center;
    width: 57.500px;
    flex-shrink: 0;
  }

  .start { width: 58px; }

  .taskbtn {
    display: flex;
    align-items: center;
    box-sizing: border-box;
    width: 185px;
    height: 44px;
    margin-left: 2px;
    background: #33505f;
    border: 1px solid #4a6573;
    padding-left: 14px;
  }

  .taskbtn.current { width: 186px; background: #5c6d79; border: 2px solid #9aa6ae; }
  .tbtn-ic { display: flex; width: 28px; }
  .tbtn-drv { margin-right: 3px; }

  .tray {
    display: flex;
    align-items: center;
    gap: 8px;
    margin-left: 69px;
  }

  .colorbox {
    width: 18px;
    height: 15px;
    background: conic-gradient(from 200deg, #e01b24, #e6d21a, #1fc23a, #18b8d8, #2030d8, #d01fb0, #e01b24);
    border-bottom: 2px solid #0a3;
  }

  .clock {
    display: flex;
    flex-direction: column;
    align-items: center;
    gap: 6px;
    width: 100px;
    margin-left: 20px;
    line-height: 16px;
  }
</style>
